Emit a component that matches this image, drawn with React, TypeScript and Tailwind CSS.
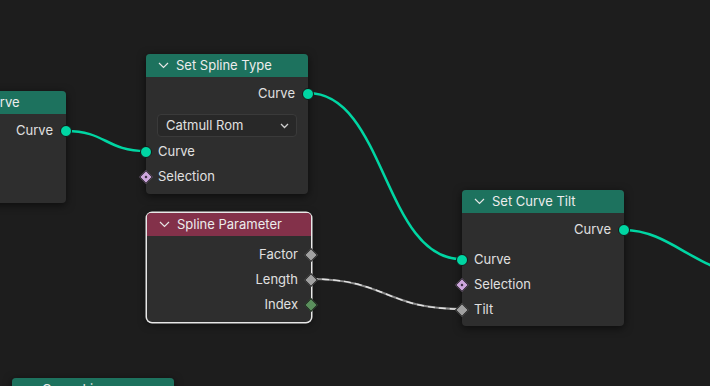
import React from 'react';

type SocketKind = 'geo' | 'sel' | 'float' | 'int';

function Socket({ kind, side }: { kind: SocketKind; side: 'left' | 'right' }) {
  const pos =
    side === 'left'
      ? 'left-0 -translate-x-1/2 top-1/2 -translate-y-1/2'
      : 'right-0 translate-x-1/2 top-1/2 -translate-y-1/2';

  if (kind === 'geo') {
    return (
      <span
        className={`absolute ${pos} w-[12px] h-[12px] rounded-full bg-[#00d6a3] border border-[#151515]`}
      />
    );
  }

  const color = kind === 'sel' ? 'bg-[#cda6dd]' : kind === 'int' ? 'bg-[#5a8f5c]' : 'bg-[#a1a1a1]';
  return (
    <span className={`absolute ${pos} w-[14px] h-[14px] flex items-center justify-center`}>
      <span
        className={`w-[10px] h-[10px] shrink-0 rotate-45 ${color} border border-[#1a1a1a] flex items-center justify-center`}
      >
        {kind === 'sel' && <span className="w-[2px] h-[2px] bg-[#2a2030]" />}
      </span>
    </span>
  );
}

function Row({
  label,
  side,
  kind,
}: {
  label: string;
  side: 'left' | 'right';
  kind: SocketKind;
}) {
  return (
    <div
      className={`relative h-[25px] flex items-center ${
        side === 'right' ? 'justify-end pr-[13px]' : 'justify-start pl-[12px]'
      }`}
    >
      <span className="text-[13px] text-[#e0e0e0] leading-none">{label}</span>
      <Socket kind={kind} side={side} />
    </div>
  );
}

function Chevron() {
  return (
    <svg width="11" height="7" viewBox="0 0 11 7" className="shrink-0">
      <polyline points="1,1 5.5,5.5 10,1" fill="none" stroke="#e6e6e6" strokeWidth="1.2" />
    </svg>
  );
}

function Header({ title, color }: { title: string; color: 'green' | 'red' }) {
  return (
    <div
      className={`h-[23px] flex items-center gap-[7px] pl-[12px] rounded-t-[4px] ${
        color === 'green' ? 'bg-[#1d725e]' : 'bg-[#83314a]'
      }`}
    >
      <Chevron />
      <span className="text-[13px] text-[#ececec] leading-none whitespace-nowrap">{title}</span>
    </div>
  );
}

export default function App() {
  return (
    <div
      className="relative w-[710px] h-[386px] overflow-hidden bg-[#1d1d1d]"
      style={{ fontFamily: 'Inter, "Noto Sans", sans-serif' }}
    >
      {/* links, drawn under the nodes */}
      <svg className="absolute inset-0" width="710" height="386">
        <path d="M66,131 C106,131 106,151 146,151" fill="none" stroke="#00d6a3" strokeWidth="2.6" />
        <path d="M308,93 C385,93 384,259 461,259" fill="none" stroke="#00d6a3" strokeWidth="2.6" />
        <path d="M624,230 C664,230 690,262 730,272" fill="none" stroke="#00d6a3" strokeWidth="2.6" />
        <path d="M311,279 C386,279 386,309 461,309" fill="none" stroke="#8c8c8c" strokeWidth="2" />
        <path
          d="M311,279 C386,279 386,309 461,309"
          fill="none"
          stroke="#e2e2e2"
          strokeWidth="1.4"
          strokeDasharray="7 4"
        />
      </svg>

      {/* Resample Curve (cut off on the left) */}
      <div className="absolute left-[-111px] top-[91px] w-[177px] h-[112px] rounded-[4px] bg-[#2e2e2e] shadow-[0_2px_8px_rgba(0,0,0,0.6)]">
        <Header title="Resample Curve" color="green" />
        <div className="pt-[4px]">
          <Row label="Curve" side="right" kind="geo" />
        </div>
      </div>

      {/* Set Spline Type */}
      <div className="absolute left-[146px] top-[54px] w-[162px] rounded-[4px] bg-[#2e2e2e] shadow-[0_2px_8px_rgba(0,0,0,0.6)]">
        <Header title="Set Spline Type" color="green" />
        <div className="pt-[4px] pb-[5px] flex flex-col">
          <Row label="Curve" side="right" kind="geo" />
          <div className="mt-[8px] mx-[11px] h-[23px] rounded-[4px] bg-[#282828] border border-[#3a3a3a] flex items-center justify-between pl-[8px] pr-[7px]">
            <span className="text-[13px] text-[#e0e0e0] leading-none">Catmull Rom</span>
            <svg width="9" height="6" viewBox="0 0 9 6">
              <polyline points="1,1 4.5,4.5 8,1" fill="none" stroke="#d0d0d0" strokeWidth="1.3" />
            </svg>
          </div>
          <div className="mt-[2px]">
            <Row label="Curve" side="left" kind="geo" />
            <Row label="Selection" side="left" kind="sel" />
          </div>
        </div>
      </div>

      {/* Spline Parameter (selected) */}
      <div className="absolute left-[147px] top-[213px] w-[164px] rounded-[5px] bg-[#2e2e2e] ring-[1.5px] ring-[#e8e8e8] shadow-[0_2px_8px_rgba(0,0,0,0.6)]">
        <Header title="Spline Parameter" color="red" />
        <div className="pt-[6px] pb-[5px]">
          <Row label="Factor" side="right" kind="float" />
          <Row label="Length" side="right" kind="float" />
          <Row label="Index" side="right" kind="int" />
        </div>
      </div>

      {/* Set Curve Tilt */}
      <div className="absolute left-[462px] top-[190px] w-[162px] rounded-[4px] bg-[#2e2e2e] shadow-[0_2px_8px_rgba(0,0,0,0.6)]">
        <Header title="Set Curve Tilt" color="green" />
        <div className="pt-[4px] pb-[4px]">
          <Row label="Curve" side="right" kind="geo" />
          <div className="mt-[5px]">
            <Row label="Curve" side="left" kind="geo" />
            <Row label="Selection" side="left" kind="sel" />
            <Row label="Tilt" side="left" kind="float" />
          </div>
        </div>
      </div>

      {/* node peeking in at the bottom */}
      <div className="absolute left-[12px] top-[378px] w-[162px] h-[80px] rounded-[4px] bg-[#2e2e2e] shadow-[0_2px_8px_rgba(0,0,0,0.6)]">
        <Header title="Curve Line" color="green" />
      </div>
    </div>
  );
}
